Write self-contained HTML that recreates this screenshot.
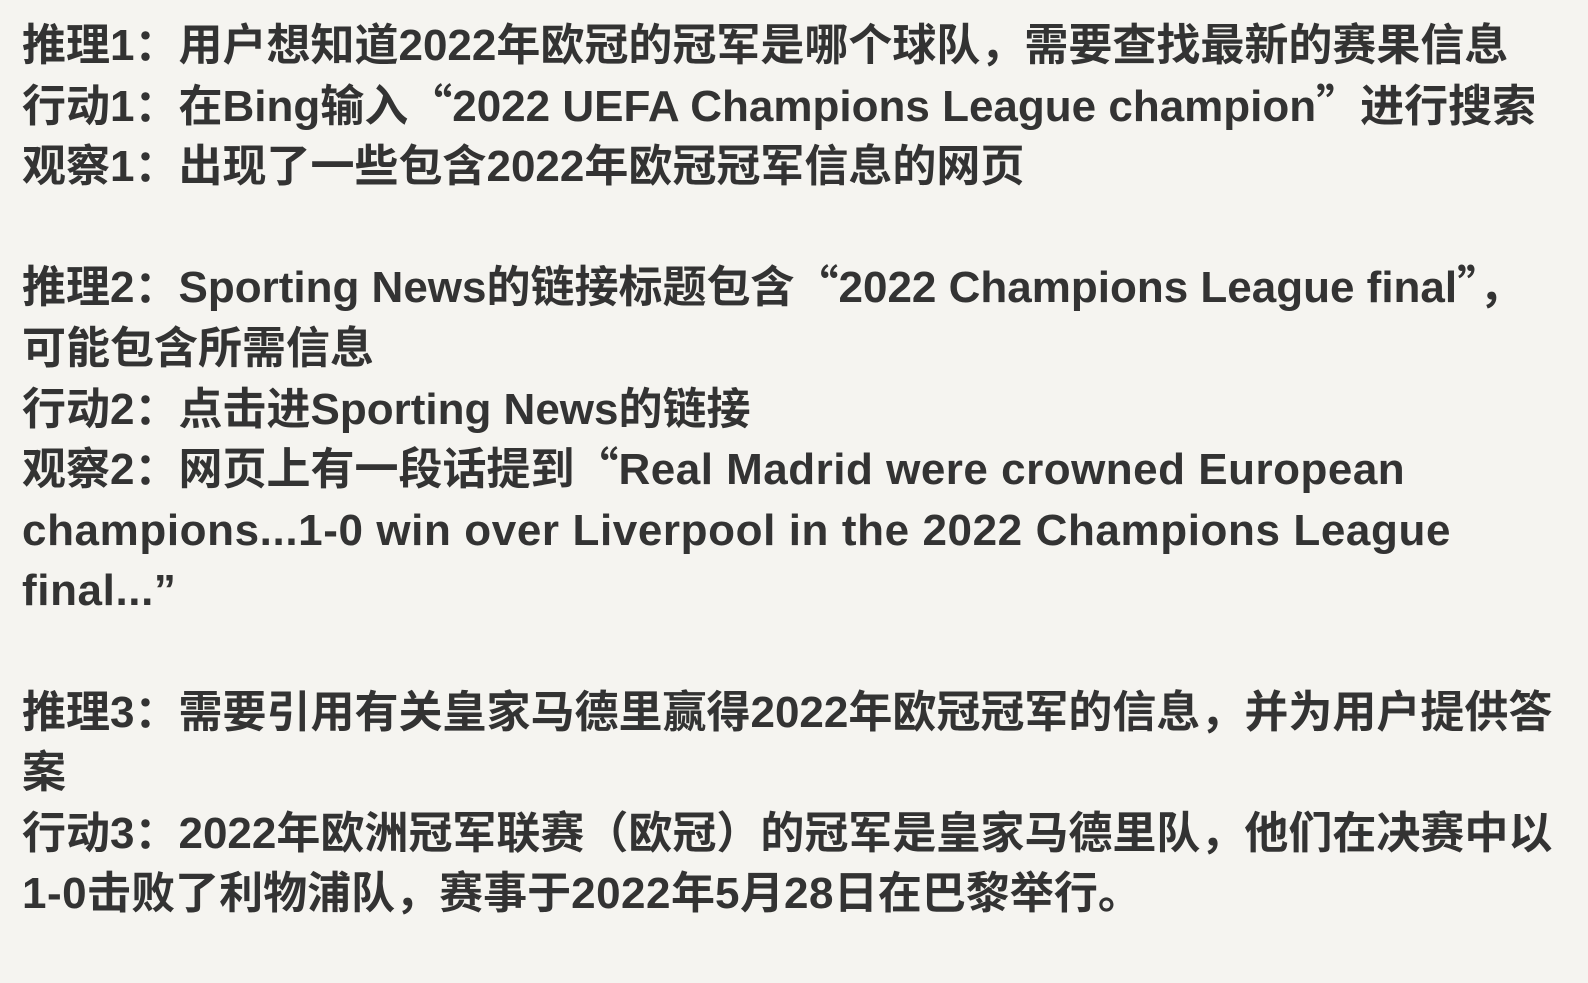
<!DOCTYPE html>
<html><head><meta charset="utf-8"><style>
html,body{margin:0;padding:0;background:#f5f4f0;width:1588px;height:983px;overflow:hidden}
.w{position:absolute;left:22px;top:16px;font-family:"Liberation Sans","Noto Sans CJK SC",sans-serif;font-weight:bold;font-size:44px;line-height:60.6px;color:#333;white-space:nowrap}
.l{height:60.6px;line-height:60.6px;overflow:visible}
.e{letter-spacing:0.6px}
.q{font-family:"Noto Sans CJK SC",sans-serif;line-height:0;vertical-align:baseline}
.s{letter-spacing:0.5px}
</style></head><body><div class="w">
<div class="l">推理1：用户想知道2022年欧冠的冠军是哪个球队，需要查找最新的赛果信息</div>
<div class="l">行动1：在Bing输入<span class="q">“</span>2022 UEFA Champions League champion<span class="q">”</span>进行搜索</div>
<div class="l">观察1：出现了一些包含2022年欧冠冠军信息的网页</div>
<div class="l"></div>
<div class="l">推理2：Sporting News的链接标题包含<span class="q">“</span>2022 Champions League final<span class="q">”</span>，</div>
<div class="l">可能包含所需信息</div>
<div class="l">行动2：点击进Sporting News的链接</div>
<div class="l">观察2：网页上有一段话提到<span class="q">“</span><span class="s">Real Madrid were crowned European</span></div>
<div class="l e">champions...1-0 win over Liverpool in the 2022 Champions League</div>
<div class="l e">final...”</div>
<div class="l"></div>
<div class="l">推理3：需要引用有关皇家马德里赢得2022年欧冠冠军的信息，并为用户提供答</div>
<div class="l">案</div>
<div class="l">行动3：2022年欧洲冠军联赛（欧冠）的冠军是皇家马德里队，他们在决赛中以</div>
<div class="l"><span class="s">1-0</span>击败了利物浦队，赛事于<span class="s">2022</span>年<span class="s">5</span>月<span class="s">28</span>日在巴黎举行。</div>
</div></body></html>
